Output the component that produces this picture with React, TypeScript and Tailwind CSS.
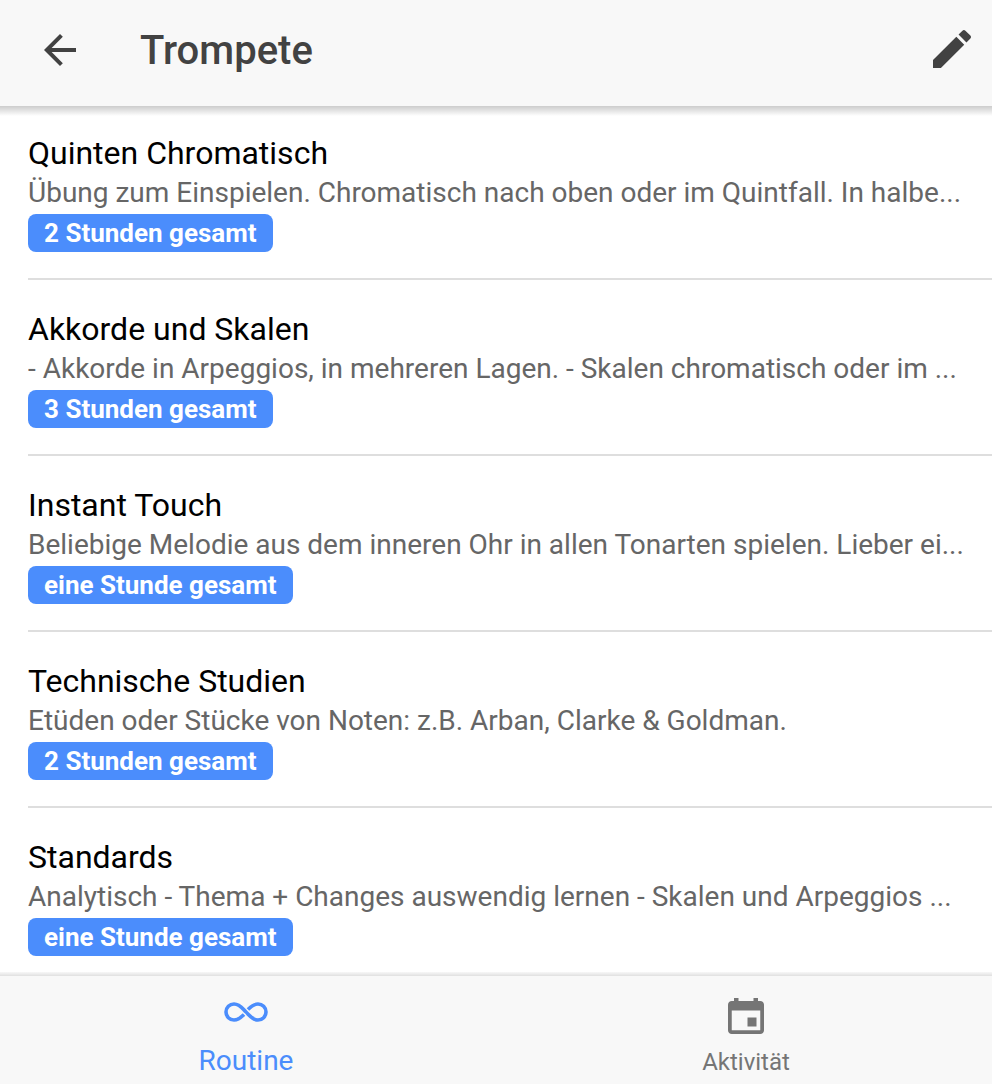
const exercises = [
  {
    title: "Quinten Chromatisch",
    note: "Übung zum Einspielen. Chromatisch nach oben oder im Quintfall. In halbe...",
    total: "2 Stunden gesamt",
  },
  {
    title: "Akkorde und Skalen",
    note: "- Akkorde in Arpeggios, in mehreren Lagen. - Skalen chromatisch oder im ...",
    total: "3 Stunden gesamt",
  },
  {
    title: "Instant Touch",
    note: "Beliebige Melodie aus dem inneren Ohr in allen Tonarten spielen. Lieber ei...",
    total: "eine Stunde gesamt",
  },
  {
    title: "Technische Studien",
    note: "Etüden oder Stücke von Noten: z.B. Arban, Clarke & Goldman.",
    total: "2 Stunden gesamt",
  },
  {
    title: "Standards",
    note: "Analytisch - Thema + Changes auswendig lernen - Skalen und Arpeggios ...",
    total: "eine Stunde gesamt",
  },
];

function BackIcon() {
  return (
    <svg viewBox="0 0 24 24" className="size-12" fill="currentColor" aria-hidden="true">
      <path d="M20 11H7.83l5.59-5.59L12 4l-8 8 8 8 1.41-1.41L7.83 13H20v-2z" />
    </svg>
  );
}

function PencilIcon() {
  return (
    <svg viewBox="64 64 384 384" className="size-[38px]" fill="currentColor" aria-hidden="true">
      <path d="M64 368v80h80l235.727-235.729-79.999-79.998L64 368zm377.602-217.602c8.531-8.531 8.531-21.334 0-29.865l-50.135-50.135c-8.531-8.531-21.334-8.531-29.865 0l-39.468 39.469 79.999 79.998 39.469-39.467z" />
    </svg>
  );
}

function InfinityIcon() {
  return (
    <svg
      viewBox="0 0 44 20"
      className="h-5 w-11"
      fill="none"
      stroke="currentColor"
      strokeWidth="3.6"
      aria-hidden="true"
    >
      <path d="M20 12.5C17 15.4 14.6 18 10 18A8 8 0 0 1 10 2C16 2 18.8 7 22 10S28 18 34 18A8 8 0 0 0 34 2C29.4 2 27 4.6 24 7.5" />
    </svg>
  );
}

function CalendarIcon() {
  return (
    <svg viewBox="64 64 384 384" className="size-9" fill="currentColor" aria-hidden="true">
      <path d="M368 272h-96v96h96v-96zM336 64v32H176V64h-48v32h-24c-22 0-40 18-40 40v272c0 22 18 40 40 40h304c22 0 40-18 40-40V136c0-22-18-40-40-40h-24V64h-48zm72 344H104V196h304v212z" />
    </svg>
  );
}

export default function App() {
  return (
    <div className="flex h-screen flex-col bg-white font-[Roboto,sans-serif] text-black">
      <header className="relative z-10 flex h-[106px] shrink-0 items-center bg-[#f8f8f8] pr-[21px] pb-1.5 pl-9 text-[#424242] after:absolute after:inset-x-0 after:top-full after:h-2.5 after:bg-linear-to-b after:from-black/20 after:to-transparent">
        <button type="button" aria-label="Zurück">
          <BackIcon />
        </button>
        <h1 className="ml-14 flex-1 truncate pt-0.5 text-[40px] leading-[48px] font-medium">Trompete</h1>
        <button type="button" aria-label="Bearbeiten" className="pb-0.5">
          <PencilIcon />
        </button>
      </header>

      <main className="min-h-0 flex-1 overflow-y-auto pl-7 [scrollbar-width:none]">
        <ul className="divide-y-2 divide-[#dedede]">
          {exercises.map((exercise) => (
            <li key={exercise.title} className="pt-[30px] pr-7 pb-[26px] first:pt-7">
              <h2 className="truncate text-[32px] leading-[38px]">{exercise.title}</h2>
              <p className="truncate text-[28px] leading-[42px] text-[#666666]">{exercise.note}</p>
              <span className="block w-fit rounded-lg bg-[#4b8dfc] px-4 text-[26px] leading-[38px] font-bold text-white">
                {exercise.total}
              </span>
            </li>
          ))}
        </ul>
      </main>

      <nav className="relative z-10 flex h-[108px] shrink-0 gap-2 bg-[#f8f8f8] before:absolute before:inset-x-0 before:bottom-full before:h-1 before:bg-linear-to-t before:from-black/12 before:to-black/3">
        <a
          href="#routine"
          aria-current="page"
          className="flex flex-1 flex-col items-center pt-[26px] text-[28px] leading-8 text-[#4b8dfc]"
        >
          <InfinityIcon />
          <span className="mt-[23px]">Routine</span>
        </a>
        <a
          href="#aktivitaet"
          className="flex flex-1 flex-col items-center pt-[22px] text-2xl leading-8 text-[#757575]"
        >
          <CalendarIcon />
          <span className="mt-3">Aktivität</span>
        </a>
      </nav>
    </div>
  );
}
